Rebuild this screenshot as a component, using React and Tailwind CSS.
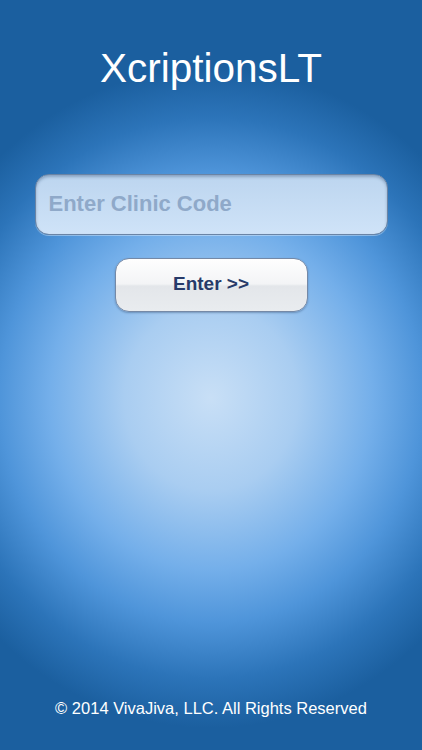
import React, { useState } from 'react'

function App() {
    const [code, setCode] = useState('')

    return (
        <div
            className='h-[750px] w-full flex flex-col items-center bg-[#1b5f9f] bg-[radial-gradient(310px_330px_at_50%_398px,#c8dff6_0%,#a9cdf1_28%,#74afea_52%,#4f95da_68%,#2c74b9_85%,#1b5f9f_100%)]'
            style={{ fontFamily: '"Liberation Sans", Arial, sans-serif' }}
        >
            <h1 className='pt-[48px] text-[40.5px] leading-none text-white font-normal'>XcriptionsLT</h1>

            <form onSubmit={(e) => e.preventDefault()} className='w-full flex flex-col items-center'>
                <input
                    type='text'
                    value={code}
                    onChange={(e) => setCode(e.target.value)}
                    placeholder='Enter Clinic Code'
                    className='mt-[85px] w-[353px] h-[61px] rounded-[14px] border border-[#6a84a5] bg-[linear-gradient(to_bottom,#bcd5ef,#cfe3f8)] px-[13px] text-[22px] font-bold text-[#2a3d6b] placeholder:text-[#8fa9c9] outline-none shadow-[inset_0_2px_3px_rgba(40,70,110,0.35),0_1px_0_rgba(255,255,255,0.35)]'
                />
                <button
                    type='submit'
                    className='mt-[23px] w-[193px] h-[54px] rounded-[14px] border border-[#7589a6] bg-[linear-gradient(to_bottom,#fefefe_0%,#f3f4f6_48%,#e3e6ea_52%,#e9ecef_100%)] text-[19px] font-bold text-[#273a69] shadow-[0_1px_2px_rgba(20,50,90,0.35)]'
                >
                    Enter &gt;&gt;
                </button>
            </form>

            <div className='mt-auto pb-[34px] text-[16.5px] leading-none text-white'>
                © 2014 VivaJiva, LLC. All Rights Reserved
            </div>
        </div>
    )
}

export default App
